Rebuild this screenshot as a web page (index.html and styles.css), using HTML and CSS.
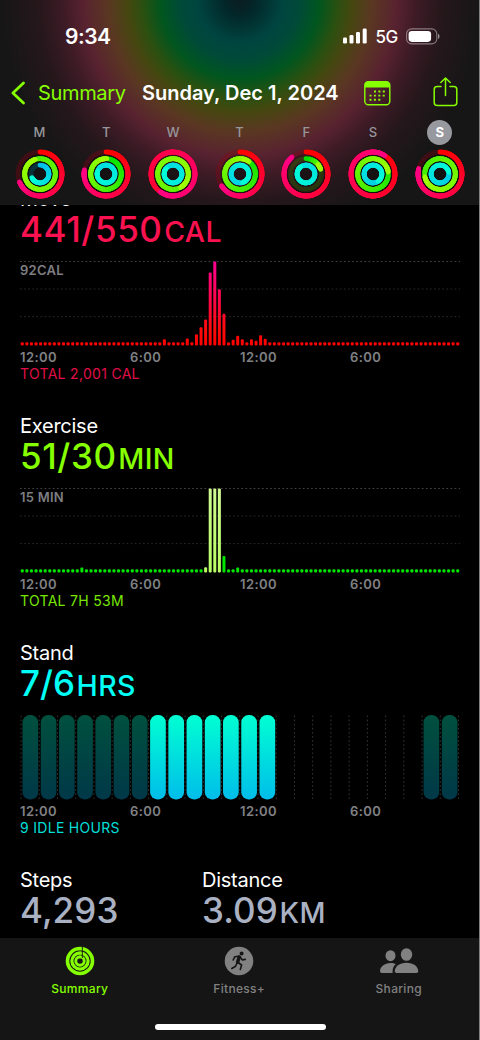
FILE: index.html
```
<!DOCTYPE html>
<html lang="en">
<head>
<meta charset="utf-8">
<title>Activity Summary</title>
<link rel="stylesheet" href="styles.css">
</head>
<body>
<div class="phone">
  <header class="header">
    <div class="status">
      <span class="clock">9:34</span>
      <div class="status-right">
        <svg class="signal" width="24" height="16" viewBox="0 0 24 16" fill="#fff"><rect x="0" y="9.5" width="4" height="6" rx="1.3"/><rect x="6.5" y="7" width="4" height="8.5" rx="1.3"/><rect x="13" y="4" width="4" height="11.5" rx="1.3"/><rect x="19.7" y="0.5" width="4" height="15" rx="1.3"/></svg>
        <span class="network">5G</span>
        <svg class="battery" width="34" height="17" viewBox="0 0 34 17"><rect x=".6" y=".9" width="30.2" height="15" rx="5" fill="none" stroke="#fff" stroke-opacity=".42" stroke-width="1.1"/><rect x="2.6" y="2.9" width="22.5" height="11" rx="3.3" fill="#fff"/><path d="M32 5.8c2 .8 2 4.400 0 5.200z" fill="#fff" fill-opacity=".5"/></svg>
      </div>
    </div>
    <nav class="nav">
      <a class="back"><svg width="14" height="24" viewBox="0 0 14 24" fill="none" stroke="#86ff00" stroke-width="2.700" stroke-linecap="round" stroke-linejoin="round"><path d="M12.500 1.900 1.900 12l10.600 10.100"/></svg><span>Summary</span></a>
      <h1 class="date">Sunday, Dec 1, 2024</h1>
      <svg class="calendar" width="27" height="25" viewBox="0 0 27 25"><rect x=".8" y=".8" width="25" height="23" rx="3.500" fill="none" stroke="#86ff00" stroke-width="1.400"/><path d="M.8 6.500V4A3.200 3.200 0 0 1 4 .8h18.600A3.200 3.200 0 0 1 25.800 4v2.500z" fill="#86ff00"/><path d="M10 10.500h12M5.500 14.600h16.500M5.500 18.700h12" fill="none" stroke="#86ff00" stroke-width="1.900" stroke-dasharray="2 2.400"/></svg>
      <svg class="share" width="25" height="30" viewBox="0 0 25 30" fill="none" stroke="#86ff00" stroke-width="1.500" stroke-linecap="round" stroke-linejoin="round"><path d="M8 9.500H4.200A3 3 0 0 0 1.200 12.500V25.500A3 3 0 0 0 4.200 28.500H20.800A3 3 0 0 0 23.800 25.500V12.500A3 3 0 0 0 20.800 9.500H17M12.500 18.500V1.200M7.800 5.500 12.500 1l4.700 4.500"/></svg>
    </nav>
    <div class="week" id="week"></div>
  </header>

  <main class="content">
    <section class="metric move">
      <h2>Move</h2>
      <p class="value"><span class="num">441/550</span><small>CAL</small></p>
      <div class="chart" id="move"><span class="peak">92CAL</span></div>
      <div class="axis"><span>12:00</span><span>6:00</span><span>12:00</span><span>6:00</span></div>
      <p class="total">TOTAL 2,001 CAL</p>
    </section>
    <section class="metric exercise">
      <h2>Exercise</h2>
      <p class="value"><span class="num">51/30</span><small>MIN</small></p>
      <div class="chart" id="exercise"><span class="peak">15 MIN</span></div>
      <div class="axis"><span>12:00</span><span>6:00</span><span>12:00</span><span>6:00</span></div>
      <p class="total">TOTAL 7H 53M</p>
    </section>
    <section class="metric stand">
      <h2>Stand</h2>
      <p class="value"><span class="num">7/6</span><small>HRS</small></p>
      <div class="chart" id="stand"></div>
      <div class="axis"><span>12:00</span><span>6:00</span><span>12:00</span><span>6:00</span></div>
      <p class="total">9 IDLE HOURS</p>
    </section>
    <section class="pair">
      <div><h2>Steps</h2><p class="value"><span class="num">4,293</span></p></div>
      <div class="distance"><h2>Distance</h2><p class="value"><span class="num">3.09</span><small>KM</small></p></div>
    </section>
  </main>

  <footer class="tabs">
    <div class="tab active">
      <svg width="30" height="30" viewBox="0 0 30 30" fill="none" stroke="#86ff00"><circle cx="15" cy="15" r="12.500" stroke-width="3.600"/><circle cx="15" cy="15" r="8.100" stroke-width="3.200"/><circle cx="15" cy="15" r="4.200" stroke-width="2.900"/><path d="M17.300 .3V12" stroke="#1a1c1a" stroke-width="1"/><path d="M13.200 3.300h2.500M13.200 7.400h2.500M13.200 11.300h2.500" stroke-linecap="round" stroke-width="2"/></svg>
      <span>Summary</span>
    </div>
    <div class="tab">
      <svg width="30" height="30" viewBox="0 0 30 30"><circle cx="15" cy="15" r="14.300" fill="#818181"/><circle cx="17.600" cy="7.400" r="2" fill="#151515"/><g fill="none" stroke="#151515" stroke-linecap="round" stroke-linejoin="round"><path d="M15.200 11 13.600 16.200" stroke-width="3.500"/><path d="M14.500 10.200 10.800 10.700 9.200 14M16.400 11.200l1.800 2.700 3.100-.5M14 16.500l3.600 2.500-1.300 4.400M12.900 17.300l-1.300 3-3.800 2.200" stroke-width="1.600"/></g></svg>
      <span>Fitness+</span>
    </div>
    <div class="tab">
      <svg class="people" width="40" height="30" viewBox="0 0 40 30" fill="#818181"><ellipse cx="11.500" cy="9.700" rx="5" ry="5.500"/><path d="M2.800 27.100q-1.800 0-1.800-1.800c0-4.700 4.600-8.400 10.500-8.400 2.200 0 4 .4 5.300 1.200-2.400 2-3.500 5-3.200 9z"/><ellipse cx="27.500" cy="8.500" rx="5.700" ry="6.300"/><path d="M15.800 25.300c0-4.700 4.700-8.500 11.700-8.500s11.700 3.800 11.700 8.500q0 1.800-1.800 1.800H17.600q-1.800 0-1.800-1.800z"/></svg>
      <span>Sharing</span>
    </div>
    <div class="home"></div>
  </footer>
  <div class="edge"></div>
</div>
<script src="charts.js"></script>
</body>
</html>
```

FILE: styles.css
```
* { box-sizing: border-box; margin: 0; padding: 0; }
body { background: #000; font-family: Inter, "Liberation Sans", sans-serif; color: #fff; }
svg { display: block; flex: none; }
.phone { position: relative; width: 480px; height: 1040px; overflow: hidden; background: #000; display: flex; flex-direction: column; }

.header {
  flex: none; height: 205px; position: relative; z-index: 1;
  background: radial-gradient(circle at 240px 0, #0a1c20 0, #02292b 18px, #004440 42px, #004a38 60px, #00561f 79px, #2b5010 98px, #454710 112px, #5a3722 132px, #582230 157px, #3e1b26 176px, #25171b 202px, #161616 240px);
}
.status { height: 72px; display: flex; justify-content: space-between; align-items: center; padding: 0 40px 0 65px; }
.clock { font-size: 21px; font-weight: 600; letter-spacing: -.5px; }
.status-right { display: flex; align-items: center; }
.network { font-size: 17px; font-weight: 500; margin: 1px 8px 0 8px; letter-spacing: -.3px; }
.nav { height: 42px; display: flex; align-items: center; padding-left: 11px; }
.back { display: flex; align-items: center; gap: 13px; width: 131px; color: #86ff00; font-size: 20px; letter-spacing: -.35px; white-space: nowrap; }
.date { font-size: 20px; font-weight: 600; letter-spacing: 0; width: 222px; white-space: nowrap; }
.share { margin: -2px 0 0 41.500px; }
.week { display: grid; grid-template-columns: repeat(7, 66.700px); padding: 6px 0 0 6.200px; }
.day { display: flex; flex-direction: column; align-items: center; }
.day span { width: 25px; height: 25px; border-radius: 50%; text-align: center; font-size: 13px; line-height: 25px; font-weight: 500; color: #98969b; }
.day .today { background: #98989f; color: #fff; font-weight: 700; }
.day svg { margin-top: 4px; }

.content { height: 733px; flex: none; margin-top: -18px; padding-left: 20px; }
.metric { height: 227px; }
h2 { font-size: 20px; font-weight: 400; line-height: 24px; letter-spacing: -.25px; }
.value { height: 36px; line-height: 36px; font-size: 35px; font-weight: 500; white-space: nowrap; }
.value small { font-size: 28.500px; letter-spacing: .4px; margin-left: 1.600px; }
.chart { position: relative; width: 440px; height: 85px; margin-top: 14px; }
.peak { position: absolute; left: 0; top: 1px; font-size: 13px; line-height: 16px; font-weight: 600; letter-spacing: .25px; color: #7e7e82; }
.axis { display: grid; grid-template-columns: repeat(4, 110px); margin-top: 3px; height: 16px; line-height: 16px; font-size: 13px; font-weight: 600; color: #808084; letter-spacing: .4px; }
.total { margin-top: 1px; font-size: 14px; line-height: 16px; letter-spacing: .3px; }
.move .value { color: #fa114f; }
.move .total { color: #e00f48; }
.exercise .value { color: #86ff00; }
.move .num, .exercise .num { letter-spacing: .6px; }
.exercise .total { color: #79e600; }
.stand .value { color: #00fff6; }
.stand .total { color: #00dfd8; }
.pair { display: grid; grid-template-columns: 182px 1fr; }
.pair .value { color: #a9b1c3; }
.pair .num { letter-spacing: .1px; }

.tabs { flex: none; height: 102px; margin-top: 18px; position: relative; display: grid; grid-template-columns: repeat(3, 159.500px); background: #151515; z-index: 1; }
.tab { display: flex; flex-direction: column; align-items: center; padding-top: 8px; color: #818181; font-size: 12px; line-height: 16px; font-weight: 500; gap: 5px; letter-spacing: .3px; }
.active { color: #86ff00; }
.home { position: absolute; left: 155px; top: 86px; width: 171px; height: 6px; border-radius: 3px; background: #fff; }
.edge { position: absolute; z-index: 2; top: 0; right: 0; width: 1px; height: 1040px; background: #808080; }
```

FILE: charts.js
```
const PITCH = 440 / 96;

function quarterBars(id, heights, colorOf, gradient) {
  const host = document.getElementById(id);
  let s = '<svg width="440" height="85" viewBox="0 0 440 85">' + gradient;
  [0.5, 28, 55.6].forEach((y, i) => {
    s += `<path d="M0 ${y}H440" stroke="${i ? '#292929' : '#424242'}" stroke-dasharray="1.7 2.4"/>`;
  });
  for (let i = 0; i < 96; i++) {
    const h = heights[i] || 3.3;
    const x = (i + 0.5) * PITCH - 1.5;
    s += `<rect x="${x.toFixed(2)}" y="${(84.5 - h).toFixed(2)}" width="3" height="${h}" rx="1.1" fill="${colorOf(i)}"/>`;
  }
  host.insertAdjacentHTML('afterbegin', s + '</svg>');
}

quarterBars('move', {31: 6.3, 36: 7, 38: 11.3, 39: 18.3, 40: 26, 41: 73, 42: 84, 43: 56.3, 44: 31.7, 46: 5.7, 47: 9.7, 48: 6.3, 50: 6.2, 51: 4.7, 52: 10.3, 53: 6.7},
  () => 'url(#heat)',
  '<defs><linearGradient id="heat" gradientUnits="userSpaceOnUse" x1="0" y1="85" x2="0" y2="0"><stop offset="0" stop-color="#ff0000"/><stop offset=".2" stop-color="#ff0a0c"/><stop offset="1" stop-color="#ff0096"/></linearGradient></defs>');
quarterBars('exercise', {13: 5, 40: 5.2, 41: 84, 42: 84, 43: 84, 44: 16.5, 47: 5},
  i => i >= 40 && i <= 43 ? 'url(#lime)' : '#00e600',
  '<defs><linearGradient id="lime" gradientUnits="userSpaceOnUse" x1="0" y1="85" x2="0" y2="0"><stop offset="0" stop-color="#b8ff62"/><stop offset="1" stop-color="#d0fa91"/></linearGradient></defs>');

function hourBars() {
  const p = 18.23;
  let s = '<svg width="440" height="85" viewBox="0 0 440 85"><defs>' +
    '<linearGradient id="on" x1="0" y1="0" x2="0" y2="1"><stop offset="0" stop-color="#00ffd2"/><stop offset="1" stop-color="#00bdea"/></linearGradient>' +
    '<linearGradient id="off" x1="0" y1="0" x2="0" y2="1"><stop offset="0" stop-color="#00503e"/><stop offset="1" stop-color="#003848"/></linearGradient></defs>';
  for (let i = 0; i <= 24; i++) {
    s += `<path d="M${(1 + i * p).toFixed(2)} .5V84" stroke="#333" stroke-dasharray="1.7 2.4"/>`;
  }
  for (let i = 0; i < 24; i++) {
    if (i > 13 && i < 22) continue;
    const fill = i > 6 && i < 14 ? 'on' : 'off';
    s += `<rect x="${(2.5 + i * p).toFixed(2)}" y="0" width="15.7" height="84.5" rx="7.3" fill="url(#${fill})"/>`;
  }
  document.getElementById('stand').innerHTML = s + '</svg>';
}
hourBars();

const MOVE = [[255, 0, 0], [255, 0, 130]];
const EXERCISE = [[0, 225, 0], [160, 255, 0]];
const STAND = [[0, 190, 235], [0, 255, 215]];

/* A progress ring: colour runs from the first to the second stop along the arc. */
function ring(r, width, progress, stops, track) {
  let s = `<circle cx="25" cy="25" r="${r}" fill="none" stroke="${track}" stroke-width="${width}"/>`;
  const total = progress * 360;
  const point = a => {
    const t = (a - 90) * Math.PI / 180;
    return `${(25 + r * Math.cos(t)).toFixed(2)} ${(25 + r * Math.sin(t)).toFixed(2)}`;
  };
  const first = Math.max(0, total - 360);
  for (let a = first; a < total; a += 10) {
    const e = Math.min(a + 34, total);
    const k = a / total;
    const c = stops[0].map((v, n) => Math.round(v + (stops[1][n] - v) * k));
    const cap = a === first && total < 360 || a + 10 >= total ? 'round' : 'butt';
    const start = Math.max(first, Math.min(a, total - 20));
    s += `<path d="M${point(start)}A${r} ${r} 0 0 1 ${point(e)}" fill="none" stroke="rgb(${c})" stroke-width="${width}" stroke-linecap="${cap}"/>`;
  }
  return s;
}

const days = [
  ['M', .69, 1.95, .68],
  ['T', .78, 1.01, 1.8],
  ['W', 1.60, 2.42, 1.85],
  ['T', .66, 1.10, 1.45],
  ['F', .89, .20, 1.9],
  ['S', 1.09, 1.23, 1.4],
  ['S', .79, 1.72, 1.22]
];
document.getElementById('week').innerHTML = days.map(([name, m, e, st], i) =>
  `<div class="day"><span class="${i === 6 ? 'today' : ''}">${name}</span><svg width="50" height="50" viewBox="0 0 50 50">` +
  '<circle cx="25" cy="25" r="20" fill="#000" fill-opacity=".28"/>' +
  '<circle cx="25" cy="25" r="6.5" fill="#141414" fill-opacity=".6"/>' +
  ring(22, 4.8, m, MOVE, 'rgba(150,0,20,.32)') +
  ring(15.4, 4.8, e, EXERCISE, 'rgba(60,110,10,.4)') +
  ring(8.9, 4.8, st, STAND, 'rgba(0,90,110,.45)') + '</svg></div>').join('');
```
